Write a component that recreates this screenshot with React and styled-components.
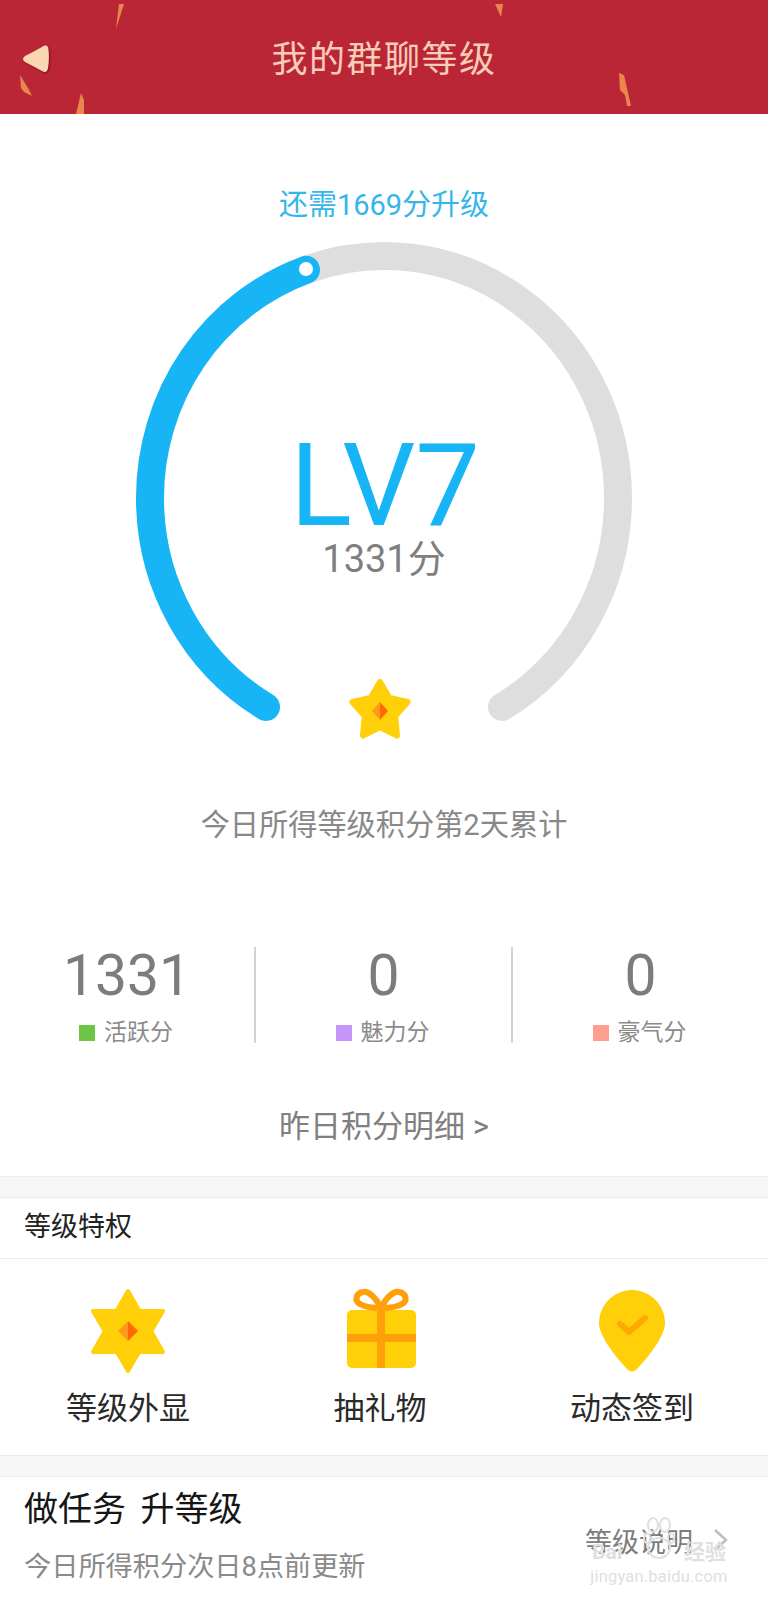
import React from "react";
import styled, { createGlobalStyle } from "styled-components";

const Global = createGlobalStyle`
  html, body { margin: 0; padding: 0; background: #fff; }
  body { font-family: Roboto, "Noto Sans CJK SC", sans-serif; }
`;
const Page = styled.div`
  width: 768px; height: 1600px; overflow: hidden; position: relative; background: #fff;
`;
const Header = styled.header`
  height: 114px; background: #bb2637; position: relative;
  display: flex; align-items: center; justify-content: center;
`;
const Confetti = styled.svg`
  position: absolute; inset: 0; width: 768px; height: 114px;
`;
const Title = styled.h1`
  margin: 6px 0 0; font-size: 36px; font-weight: 400; color: #f7cdb8; line-height: 44px;
  letter-spacing: 1.5px;
`;
const Hint = styled.div`
  margin-top: 71px; text-align: center; font-size: 29px; line-height: 40px; color: #35b6e8;
`;
const Dial = styled.div`
  margin-top: 15px; height: 504px; position: relative;
`;
const DialArt = styled.svg`
  display: block; width: 768px; height: 504px;
`;
const DialCenter = styled.div`
  position: absolute; left: 0; right: 0; top: 201px;
  display: flex; flex-direction: column; align-items: center;
`;
const Level = styled.div`
  font-size: 115px; line-height: 90px; font-weight: 400; color: #18b5f6; margin-left: 2px;
`;
const Score = styled.div`
  font-size: 38px; line-height: 46px; color: #7f7f7f; margin-top: 5px;
`;
const Note = styled.div`
  margin-top: 61px; text-align: center; font-size: 29.2px; line-height: 40px; color: #888;
`;
const Stats = styled.div`
  margin-top: 102px; display: grid; grid-template-columns: 254px 257px 257px; height: 96px;
`;
const Stat = styled.div`
  display: flex; flex-direction: column; justify-content: space-between; align-items: center;
  border-left: ${(p) => (p.$first ? "none" : "2px solid #d2d2d2")};
`;
const StatValue = styled.div`
  font-size: 57px; line-height: 56px; font-weight: 400; color: #7c7c7c; margin-top: 1px;
`;
const StatLabel = styled.div`
  display: flex; align-items: center; gap: 9px; font-size: 23px; line-height: 24px; color: #8a8a8a;
  position: relative; top: 2px; left: -1px;
`;
const Swatch = styled.span`
  width: 16px; height: 16px; background: ${(p) => p.$color};
`;
const DetailLink = styled.div`
  margin-top: 64px; padding-bottom: 29px; text-align: center; font-size: 31px; line-height: 40px; color: #808080;
`;
const Band = styled.div`
  height: 20px; background: #f6f6f6; border-top: 1px solid #ebebeb; border-bottom: 1px solid #ebebeb;
`;
const SectionTitle = styled.div`
  height: 61px; padding: 0 0 8px 24px; box-sizing: border-box; display: flex; align-items: center;
  font-size: 27px; color: #222; border-bottom: 1px solid #eee;
`;
const Perks = styled.div`
  height: 196px; padding: 27px 0 0 2px; box-sizing: border-box;
  display: grid; grid-template-columns: repeat(3, 252px); align-content: start;
`;
const Perk = styled.div`
  display: flex; flex-direction: column; align-items: center; gap: 13px;
`;
const PerkIcon = styled.svg`
  display: block; width: 90px; height: 90px;
`;
const PerkName = styled.div`
  font-size: 31px; line-height: 40px; color: #2a2a2a;
`;
const Task = styled.div`
  display: flex; justify-content: space-between; padding: 10px 40px 0 24px; height: 123px; box-sizing: border-box;
`;
const TaskTitle = styled.div`
  font-size: 34px; line-height: 44px; color: #151515; word-spacing: 6px;
`;
const TaskSub = styled.div`
  margin-top: 16px; font-size: 27.2px; line-height: 40px; color: #8a8a8a;
`;
const TaskMore = styled.div`
  display: flex; align-items: center; gap: 20px; height: 40px; margin-top: 33px;
  font-size: 27px; color: #7c7c7c;
`;
const Watermark = styled.div`
  position: absolute; left: 588px; top: 1514px; width: 142px; height: 72px; color: #e0e0e0;
  display: flex; flex-direction: column; align-items: center; pointer-events: none;
`;
const Paw = styled.svg`
  position: absolute; left: 55px; top: 2px; width: 32px; height: 44px;
`;
const MarkBrand = styled.div`
  margin-top: 26px; width: 134px; display: flex; justify-content: space-between;
  font-size: 21px; line-height: 24px; font-weight: 700; white-space: nowrap;
`;
const MarkUrl = styled.div`
  margin-top: 3px; font-size: 16.5px; line-height: 20px; letter-spacing: 0.2px; white-space: nowrap;
`;

const stats = [
  { value: "1331", label: "活跃分", color: "#6cc644" },
  { value: "0", label: "魅力分", color: "#c596fa" },
  { value: "0", label: "豪气分", color: "#ff9f92" },
];

export default function App() {
  return (
    <Page>
      <Global />
      <Header>
        <Confetti viewBox="0 0 768 114">
          <g fill="#e8874c">
            <polygon points="119,4 124,4 116,29" />
            <polygon points="495,4 503,4 501,17" />
            <polygon points="619,73 624,75 631,106 627,106 625,95 620,90" />
            <polygon points="20,75 28,88 32,96 24,92 21,88" />
            <polygon points="81,93 84,100 84,114 76,114" />
          </g>
          <path
            d="M42 47 Q48 43 48.5 50 Q49.5 59 48 68 Q47 74 42 71 Q33 66 25 62 Q21 59 25 56 Q33 52 42 47 Z"
            fill="#fbd6b2"
            style={{ filter: "drop-shadow(1px 1px 1px rgba(90,0,10,.6))" }}
          />
        </Confetti>
        <Title>我的群聊等级</Title>
      </Header>
      <Hint>还需1669分升级</Hint>
      <Dial>
        <DialArt viewBox="0 240 768 504">
          <g fill="none" strokeWidth="28" strokeLinecap="round">
            <path d="M306 269.8 A234 242 0 0 1 618 498 A234 242 0 0 1 502 707" stroke="#dedede" />
            <path d="M266 707 A234 242 0 0 1 150 498 A234 242 0 0 1 306 269.8" stroke="#18b5f6" />
          </g>
          <circle cx="306" cy="269" r="7" fill="#fff" />
          <polygon
            points="380,682 389.4,698 407.6,702 395.2,716 397,735.5 380,727 363,735.5 364.8,716 352.4,702 370.6,698"
            fill="#ffcf0a"
            stroke="#ffcf0a"
            strokeWidth="6"
            strokeLinejoin="round"
          />
          <path d="M380 702 L372 711 L380 720 Z" fill="#ff9a1a" />
          <path d="M380 702 L388 711 L380 720 Z" fill="#ff6a00" />
        </DialArt>
        <DialCenter>
          <Level>LV7</Level>
          <Score>1331分</Score>
        </DialCenter>
      </Dial>
      <Note>今日所得等级积分第2天累计</Note>
      <Stats>
        {stats.map((s, i) => (
          <Stat key={s.label} $first={i === 0}>
            <StatValue>{s.value}</StatValue>
            <StatLabel>
              <Swatch $color={s.color} />
              {s.label}
            </StatLabel>
          </Stat>
        ))}
      </Stats>
      <DetailLink>昨日积分明细 &gt;</DetailLink>
      <Band />
      <SectionTitle>等级特权</SectionTitle>
      <Perks>
        <Perk>
          <PerkIcon viewBox="0 0 90 90">
            <g fill="#ffcf0a" stroke="#ffcf0a" strokeWidth="4" strokeLinejoin="round">
              <polygon points="45,5 80,66 10,66" />
              <polygon points="45,85 10,25 80,25" />
            </g>
            <path d="M45 35 L35 45 L45 55 Z" fill="#ff9a1a" />
            <path d="M45 35 L55 45 L45 55 Z" fill="#ff6a00" />
          </PerkIcon>
          <PerkName>等级外显</PerkName>
        </Perk>
        <Perk>
          <PerkIcon viewBox="0 0 90 90">
            <rect x="12" y="24" width="69" height="58" rx="5" fill="#ffcf0a" />
            <rect x="42" y="24" width="8" height="58" fill="#ff9f0a" />
            <rect x="12" y="48" width="69" height="8" fill="#ff9f0a" />
            <g fill="none" stroke="#ff9f0a" strokeWidth="6" strokeLinejoin="round">
              <path d="M46 22 C40 10 33 5 28 6 C21 7 19 15 25 18 C30 21 38 22 46 22" />
              <path d="M46 22 C52 10 59 5 64 6 C71 7 73 15 67 18 C62 21 54 22 46 22" />
            </g>
          </PerkIcon>
          <PerkName>抽礼物</PerkName>
        </Perk>
        <Perk>
          <PerkIcon viewBox="0 0 90 90">
            <path
              d="M45 4 C63 4 78 19 78 37 C78 50 62 70 50 83 Q45 88 40 83 C28 70 12 50 12 37 C12 19 27 4 45 4 Z"
              fill="#ffcf0a"
            />
            <path d="M33 38 L42 46 L58 32" fill="none" stroke="#ffa800" strokeWidth="6" strokeLinecap="round" strokeLinejoin="round" />
          </PerkIcon>
          <PerkName>动态签到</PerkName>
        </Perk>
      </Perks>
      <Band />
      <Task>
        <div>
          <TaskTitle>做任务 升等级</TaskTitle>
          <TaskSub>今日所得积分次日8点前更新</TaskSub>
        </div>
        <TaskMore>
          等级说明
          <svg width="15" height="24" viewBox="0 0 15 24">
            <path d="M2 2 L13 12 L2 22" fill="none" stroke="#bdbdbd" strokeWidth="2.5" />
          </svg>
        </TaskMore>
      </Task>
      <Watermark>
        <Paw viewBox="0 0 32 44">
          <g fill="none" stroke="#e0e0e0" strokeWidth="2">
            <ellipse cx="10" cy="9" rx="5" ry="7" />
            <ellipse cx="22" cy="9" rx="5" ry="7" />
            <ellipse cx="4" cy="22" rx="3" ry="5" />
            <ellipse cx="28" cy="22" rx="3" ry="5" />
            <ellipse cx="16" cy="32" rx="11" ry="10" />
          </g>
        </Paw>
        <MarkBrand>
          <span>Bai</span>
          <span>经验</span>
        </MarkBrand>
        <MarkUrl>jingyan.baidu.com</MarkUrl>
      </Watermark>
    </Page>
  );
}
